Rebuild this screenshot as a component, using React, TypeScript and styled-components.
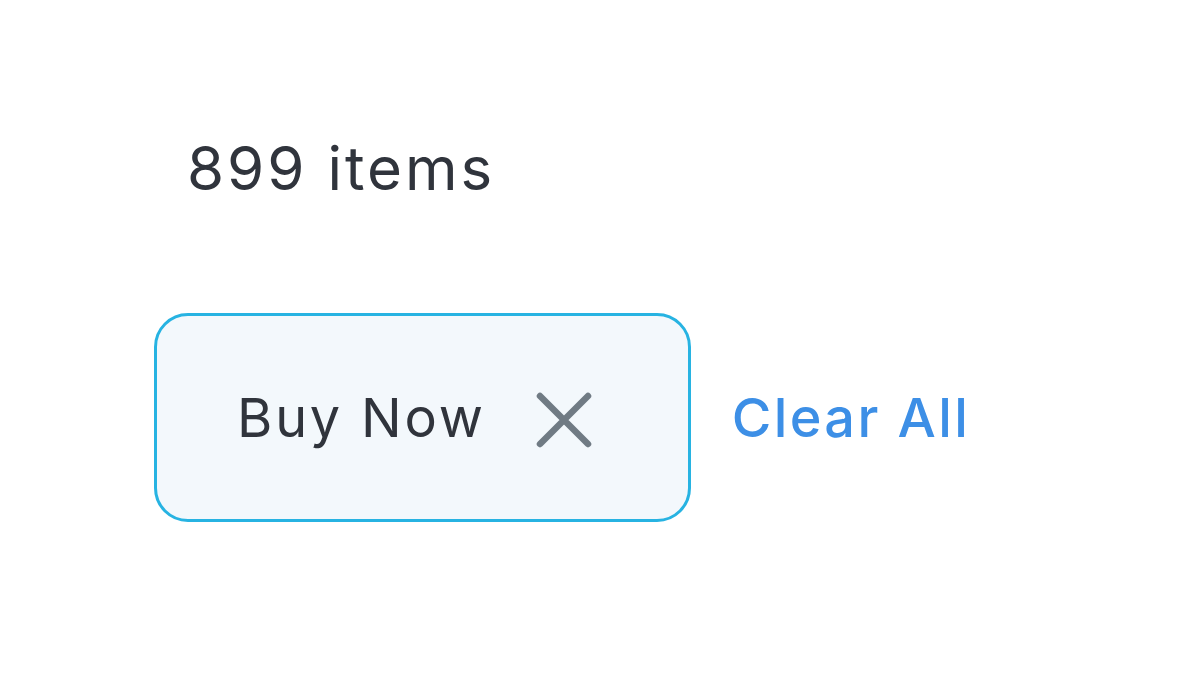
import React from "react"
import styled, { createGlobalStyle } from "styled-components"

const GlobalStyle = createGlobalStyle`
  html, body {
    margin: 0;
    padding: 0;
    background: #ffffff;
  }
  body {
    font-family: "Inter", "Noto Sans", sans-serif;
  }
`

const Page = styled.div`
  display: flex;
  flex-direction: column;
  align-items: flex-start;
  padding: 128px 0 0 154px;
  width: 1200px;
  height: 675px;
  box-sizing: border-box;
`

const Count = styled.div`
  color: #30343c;
  font-size: 60px;
  font-weight: 400;
  line-height: 80px;
  margin-left: 33px;
  letter-spacing: 3px;
`

const FilterRow = styled.div`
  display: flex;
  align-items: center;
  gap: 41px;
  margin-top: 105px;
`

const Chip = styled.div`
  display: flex;
  align-items: center;
  gap: 50px;
  box-sizing: border-box;
  height: 209px;
  padding: 0 96px 0 80px;
  border: 3px solid #27b3e2;
  border-radius: 34px;
  background: #f3f8fc;
`

const ChipLabel = styled.span`
  color: #30343c;
  font-size: 54px;
  font-weight: 400;
  letter-spacing: 2.8px;
`

const CloseButton = styled.button`
  display: flex;
  align-items: center;
  justify-content: center;
  padding: 0;
  border: none;
  background: none;
  width: 56px;
  height: 56px;
  margin-top: 4px;
  color: #707b84;
`

const ClearLink = styled.a`
  color: #3d8fe6;
  font-size: 54px;
  font-weight: 500;
  letter-spacing: 2.4px;
  text-decoration: none;
`

const CloseIcon = () => (
  <svg width="56" height="56" viewBox="0 0 56 56" fill="none">
    <path d="M4 4 L52 52 M52 4 L4 52" stroke="currentColor" strokeWidth="6.5" strokeLinecap="round" />
  </svg>
)

export default function App() {
  return (
    <>
      <GlobalStyle />
      <Page>
        <Count>899 items</Count>
        <FilterRow>
          <Chip>
            <ChipLabel>Buy Now</ChipLabel>
            <CloseButton aria-label="Remove filter">
              <CloseIcon />
            </CloseButton>
          </Chip>
          <ClearLink href="#">Clear All</ClearLink>
        </FilterRow>
      </Page>
    </>
  )
}
